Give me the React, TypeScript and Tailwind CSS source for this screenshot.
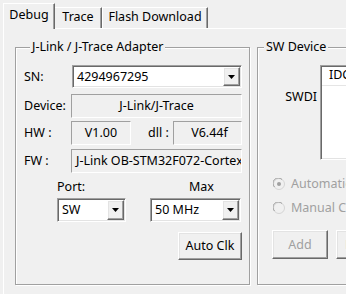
import type { ReactNode } from "react";

const sunken =
  "border border-t-[#a0a0a0] border-l-[#a0a0a0] border-b-white border-r-white shadow-[inset_1px_1px_0_#696969,inset_-1px_-1px_0_#e3e3e3] p-px";
const raised =
  "border border-t-white border-l-white border-b-[#696969] border-r-[#696969] shadow-[inset_-1px_-1px_0_#a0a0a0,inset_1px_1px_0_#e3e3e3]";
const flat =
  "border border-t-[#a0a0a0] border-l-[#a0a0a0] border-b-white border-r-white bg-[#f0f0f0]";

const Arrow = () => (
  <svg width="7" height="4" viewBox="0 0 7 4">
    <polygon points="0,0 7,0 3.5,4" fill="#000" />
  </svg>
);

const Combo = ({ value, className }: { value: string; className: string }) => (
  <div className={`flex bg-white ${sunken} ${className}`}>
    <span className="flex-1 pl-[3px] self-center whitespace-nowrap overflow-hidden">{value}</span>
    <span className={`w-[17px] shrink-0 flex items-center justify-center bg-[#f0f0f0] ${raised}`}>
      <Arrow />
    </span>
  </div>
);

const Field = ({ children, className }: { children: ReactNode; className: string }) => (
  <div className={`h-[24px] flex items-center whitespace-nowrap overflow-hidden ${flat} ${className}`}>
    {children}
  </div>
);

const Radio = ({ checked }: { checked?: boolean }) => (
  <svg width="12" height="12" viewBox="0 0 12 12" className="shrink-0">
    <circle cx="6" cy="6" r="5.5" fill="#f0f0f0" stroke="#d4d4d4" />
    <path d="M1.5 9 A5 5 0 0 1 9 1.5" fill="none" stroke="#a0a0a0" />
    {checked && <circle cx="6" cy="6" r="2" fill="#a0a0a0" />}
  </svg>
);

const Group = ({ title, className, children }: { title: string; className: string; children: ReactNode }) => (
  <div
    className={`mt-[18px] h-[238px] shrink-0 border border-[#a0a0a0] shadow-[inset_1px_1px_0_white,1px_1px_0_white] ${className}`}
  >
    <div className="-mt-[9px] ml-[6px] px-[2px] w-fit bg-[#f0f0f0] whitespace-nowrap">{title}</div>
    {children}
  </div>
);

export default function App() {
  return (
    <div className="w-[346px] h-[294px] overflow-hidden bg-[#f0f0f0] text-[12.5px] leading-[16px] text-black font-['Noto_Sans','Liberation_Sans',sans-serif]">
      {/* tabs */}
      <div className="flex items-end h-[28px] pl-[3px]">
        <div className="relative z-10 -mb-px h-[26px] w-[52px] bg-[#f0f0f0] border-t border-l border-r border-t-white border-l-white border-r-[#696969] shadow-[inset_-1px_0_0_#a0a0a0] flex justify-center pt-[3px]">
          Debug
        </div>
        <div className="h-[21px] w-[47px] border-t border-r border-t-white border-r-[#696969] shadow-[inset_-1px_0_0_#a0a0a0] flex justify-center pt-px">
          Trace
        </div>
        <div className="h-[21px] w-[106px] border-t border-l border-r border-t-white border-l-white border-r-[#696969] shadow-[inset_-1px_0_0_#a0a0a0] flex justify-center pt-px whitespace-nowrap">
          Flash Download
        </div>
      </div>

      {/* tab body */}
      <div className="ml-[3px] flex h-[266px] border-t border-l border-white pl-[11px]">
        <Group title="J-Link / J-Trace Adapter" className="w-[235px] pl-[8px] pr-[7px]">
          <div className="mt-[10px] flex items-center h-[23px]">
            <span className="w-[48px]">SN:</span>
            <Combo value="4294967295" className="w-[170px] h-[23px]" />
          </div>
          <div className="mt-[6px] flex items-center">
            <span className="w-[47px]">Device:</span>
            <Field className="w-[171px] justify-center">J-Link/J-Trace</Field>
          </div>
          <div className="mt-[3px] flex items-center">
            <span className="w-[47px]">HW :</span>
            <Field className="w-[60px] justify-center">V1.00</Field>
            <span className="ml-[17px] w-[25px]">dll :</span>
            <Field className="w-[69px] justify-center pl-[4px]">V6.44f</Field>
          </div>
          <div className="mt-[4px] flex items-center">
            <span className="w-[47px]">FW :</span>
            <Field className="w-[171px] pl-[4px]">J-Link OB-STM32F072-Cortex-M</Field>
          </div>
          <div className="mt-[6px] flex">
            <div className="ml-[33px] w-[69px]">
              <div>Port:</div>
              <Combo value="SW" className="mt-[3px] w-[69px] h-[24px]" />
            </div>
            <div className="ml-[24px] w-[91px]">
              <div className="pl-[39px]">Max</div>
              <Combo value="50 MHz" className="mt-[3px] w-[91px] h-[24px]" />
            </div>
          </div>
          <div className="mt-[10px] flex justify-end">
            <button className={`w-[64px] h-[28px] bg-[#f0f0f0] ${raised}`}>Auto Clk</button>
          </div>
        </Group>

        <Group title="SW Device" className="ml-[7px] w-[120px]">
          <div className="mt-[10px] flex items-start">
            <span className="mt-[24px] w-[62px] shrink-0 pr-[3px] text-right">SWDI</span>
            <div className={`h-[95px] w-[80px] shrink-0 bg-white ${sunken}`}>
              <div className="h-[19px] border-b border-[#e5e5e5] pl-[7px] whitespace-nowrap overflow-hidden">
                IDCODE
              </div>
            </div>
          </div>
          <div className="mt-[16px] pl-[15px] flex items-center gap-[6px] text-[#a0a0a0] whitespace-nowrap">
            <Radio checked />
            <span>Automatic Detection</span>
          </div>
          <div className="mt-[8px] pl-[15px] flex items-center gap-[6px] text-[#a0a0a0] whitespace-nowrap">
            <Radio />
            <span>Manual Configuration</span>
          </div>
          <div className="mt-[14px] pl-[14px] flex gap-[8px]">
            <button className={`w-[56px] h-[29px] shrink-0 bg-[#f0f0f0] text-[#a0a0a0] ${raised}`}>Add</button>
            <button className={`w-[56px] h-[29px] shrink-0 bg-[#f0f0f0] text-[#a0a0a0] ${raised}`}>Delete</button>
          </div>
        </Group>
      </div>
    </div>
  );
}
